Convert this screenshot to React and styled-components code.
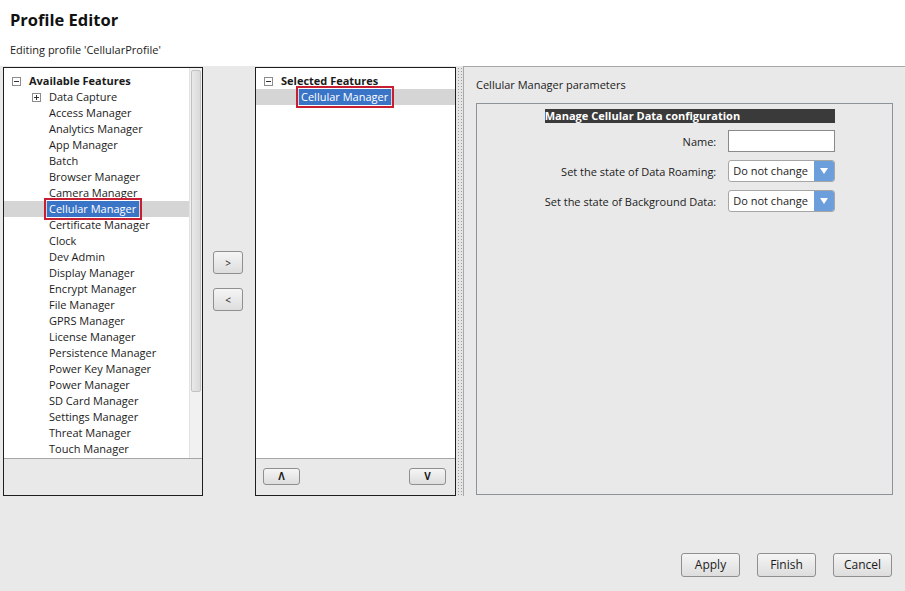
import React from "react";
import styled, { createGlobalStyle } from "styled-components";

const GlobalStyle = createGlobalStyle`
  body {
    margin: 0;
    font-family: "Open Sans", "Noto Sans", sans-serif;
    font-size: 11px;
    color: #1b1b1b;
    background: #e9e9e9;
  }
`;

const Window = styled.div`
  width: 905px;
  height: 591px;
  display: flex;
  flex-direction: column;
  overflow: hidden;
`;

const Header = styled.div`
  height: 66px;
  background: #fff;
  padding: 9px 0 0 10px;
  box-sizing: border-box;
`;

const Title = styled.h1`
  margin: 0;
  font-size: 16.5px;
  line-height: 22px;
  font-weight: 700;
  color: #111;
`;

const Subtitle = styled.div`
  margin-top: 11px;
  line-height: 16px;
`;

const Body = styled.div`
  flex: 1;
  display: flex;
  flex-direction: column;
`;

const Panels = styled.div`
  height: 430px;
  display: flex;
`;

const TreePanel = styled.div`
  width: ${(p) => p.$width}px;
  margin: 1px 0 0 ${(p) => p.$offset || 0}px;
  border: 1px solid #1e1e1e;
  box-sizing: border-box;
  display: flex;
  flex-direction: column;
`;

const TreeArea = styled.div`
  flex: 1;
  display: flex;
  background: #fff;
`;

const TreeList = styled.div`
  flex: 1;
  padding-top: 5px;
`;

const Scrollbar = styled.div`
  width: 13px;
  background: #f1f1f1;
  border-left: 1px solid #e2e2e2;
  padding: 2px 1px 0 1px;
  box-sizing: border-box;
`;

const Thumb = styled.div`
  height: 320px;
  border: 1px solid #c2c2c2;
  border-radius: 2px;
  background: linear-gradient(to right, #e9e9e9, #d9d9d9);
`;

const PanelFoot = styled.div`
  height: 37px;
  border-top: 1px solid #a6a6a6;
  display: flex;
  align-items: center;
  justify-content: space-between;
  padding: 0 9px 2px 7px;
  box-sizing: border-box;
`;

const Row = styled.div`
  height: 16px;
  display: flex;
  align-items: center;
  white-space: nowrap;
  padding-left: ${(p) => p.$level * 20 + 8 + (p.$leaf ? 17 : 0)}px;
  background: ${(p) => (p.$selected ? "#d5d5d5" : "transparent")};
  font-weight: ${(p) => (p.$root ? 700 : 400)};
`;

const Expander = styled.span`
  position: relative;
  width: 9px;
  height: 9px;
  margin-right: 8px;
  border: 1px solid #8c8c8c;
  box-sizing: border-box;
  background: #fff;
  flex: none;

  &::before {
    content: "";
    position: absolute;
    left: 1px;
    right: 1px;
    top: 3px;
    height: 1px;
    background: #333;
  }

  &::after {
    content: "";
    display: ${(p) => (p.$open ? "none" : "block")};
    position: absolute;
    top: 1px;
    bottom: 1px;
    left: 3px;
    width: 1px;
    background: #333;
  }
`;

const Label = styled.span`
  line-height: 16px;
`;

const Picked = styled.span`
  line-height: 16px;
  margin-left: -2px;
  padding: 0 3px 0 2px;
  background: #3a74c6;
  color: #fff;
  outline: 2px solid #c61f32;
  outline-offset: 1px;
`;

const MoverColumn = styled.div`
  width: 52px;
  display: flex;
  flex-direction: column;
  justify-content: center;
  gap: 14px;
  padding-left: 10px;
  box-sizing: border-box;
`;

const GreyButton = styled.button`
  width: ${(p) => p.$w}px;
  height: ${(p) => p.$h}px;
  padding: 0;
  border: 1px solid #8f8f8f;
  border-radius: 3px;
  background: linear-gradient(#f5f5f5, #dddddd);
  font-family: "Open Sans", sans-serif;
  font-size: ${(p) => p.$fs || 12}px;
  font-weight: ${(p) => (p.$bold ? 700 : 400)};
  color: #1b1b1b;
  line-height: 1;
`;

const Sash = styled.div`
  width: 7px;
  margin-top: 1px;
  background-color: #e6e6e6;
  background-image: radial-gradient(#9d9d9d 0.7px, transparent 0.9px);
  background-size: 3px 3px;
  background-position: 1px 0;
`;

const ParamPane = styled.div`
  flex: 1;
  display: flex;
  flex-direction: column;
  border-top: 1px solid #a8a8a8;
  border-left: 1px solid #a8a8a8;
  padding: 10px 12px 1px 12px;
`;

const PaneTitle = styled.div`
  line-height: 16px;
  margin-bottom: 10px;
`;

const GroupBox = styled.div`
  flex: 1;
  border: 1px solid #8c939a;
  padding: 5px 0 0 11px;
`;

const FormGrid = styled.div`
  display: grid;
  grid-template-columns: auto 107px;
  column-gap: 12px;
  row-gap: 8px;
  justify-content: center;
  align-items: center;
`;

const FormHeader = styled.div`
  grid-column: 1 / span 2;
  height: 14px;
  line-height: 14px;
  margin-bottom: -1px;
  background: #3a3a3a;
  color: #fff;
  font-weight: 700;
`;

const FieldLabel = styled.div`
  text-align: right;
  white-space: nowrap;
`;

const TextBox = styled.div`
  height: 22px;
  border: 1px solid #8a8a8a;
  background: #fff;
  box-sizing: border-box;
`;

const Select = styled.div`
  height: 22px;
  display: flex;
  border: 1px solid #a6a6a6;
  border-radius: 3px;
  background: #fff;
  box-sizing: border-box;
  overflow: hidden;
`;

const SelectText = styled.span`
  flex: 1;
  padding-left: 4px;
  line-height: 20px;
  white-space: nowrap;
`;

const SelectArrow = styled.span`
  width: 20px;
  display: flex;
  align-items: center;
  justify-content: center;
  background: #6b9edb;

  &::before {
    content: "";
    border-left: 4px solid transparent;
    border-right: 4px solid transparent;
    border-top: 6px solid #fff;
  }
`;

const Footer = styled.div`
  flex: 1;
  display: flex;
  justify-content: flex-end;
  align-items: flex-end;
  gap: 17px;
  padding: 0 13px 14px 0;
`;

const available = [
  "Access Manager",
  "Analytics Manager",
  "App Manager",
  "Batch",
  "Browser Manager",
  "Camera Manager",
  "Cellular Manager",
  "Certificate Manager",
  "Clock",
  "Dev Admin",
  "Display Manager",
  "Encrypt Manager",
  "File Manager",
  "GPRS Manager",
  "License Manager",
  "Persistence Manager",
  "Power Key Manager",
  "Power Manager",
  "SD Card Manager",
  "Settings Manager",
  "Threat Manager",
  "Touch Manager",
];

const Leaf = ({ name, selected }) => (
  <Row $level={1} $leaf $selected={selected}>
    {selected ? <Picked>{name}</Picked> : <Label>{name}</Label>}
  </Row>
);

const DropDown = () => (
  <Select>
    <SelectText>Do not change</SelectText>
    <SelectArrow />
  </Select>
);

export default function App() {
  return (
    <Window>
      <GlobalStyle />
      <Header>
        <Title>Profile Editor</Title>
        <Subtitle>Editing profile 'CellularProfile'</Subtitle>
      </Header>
      <Body>
        <Panels>
          <TreePanel $width={200} $offset={3}>
            <TreeArea>
              <TreeList>
                <Row $level={0} $root>
                  <Expander $open />
                  <Label>Available Features</Label>
                </Row>
                <Row $level={1}>
                  <Expander />
                  <Label>Data Capture</Label>
                </Row>
                {available.map((name) => (
                  <Leaf key={name} name={name} selected={name === "Cellular Manager"} />
                ))}
              </TreeList>
              <Scrollbar>
                <Thumb />
              </Scrollbar>
            </TreeArea>
            <PanelFoot />
          </TreePanel>

          <MoverColumn>
            <GreyButton $w={30} $h={23} $fs={10}>&gt;</GreyButton>
            <GreyButton $w={30} $h={23} $fs={10}>&lt;</GreyButton>
          </MoverColumn>

          <TreePanel $width={201}>
            <TreeArea>
              <TreeList>
                <Row $level={0} $root>
                  <Expander $open />
                  <Label>Selected Features</Label>
                </Row>
                <Leaf name="Cellular Manager" selected />
              </TreeList>
            </TreeArea>
            <PanelFoot>
              <GreyButton $w={37} $h={17} $fs={10} $bold>Λ</GreyButton>
              <GreyButton $w={37} $h={17} $fs={10} $bold>V</GreyButton>
            </PanelFoot>
          </TreePanel>

          <Sash />

          <ParamPane>
            <PaneTitle>Cellular Manager parameters</PaneTitle>
            <GroupBox>
              <FormGrid>
                <FormHeader>Manage Cellular Data configuration</FormHeader>
                <FieldLabel>Name:</FieldLabel>
                <TextBox />
                <FieldLabel>Set the state of Data Roaming:</FieldLabel>
                <DropDown />
                <FieldLabel>Set the state of Background Data:</FieldLabel>
                <DropDown />
              </FormGrid>
            </GroupBox>
          </ParamPane>
        </Panels>
        <Footer>
          <GreyButton $w={59} $h={24}>Apply</GreyButton>
          <GreyButton $w={59} $h={24}>Finish</GreyButton>
          <GreyButton $w={59} $h={24}>Cancel</GreyButton>
        </Footer>
      </Body>
    </Window>
  );
}
